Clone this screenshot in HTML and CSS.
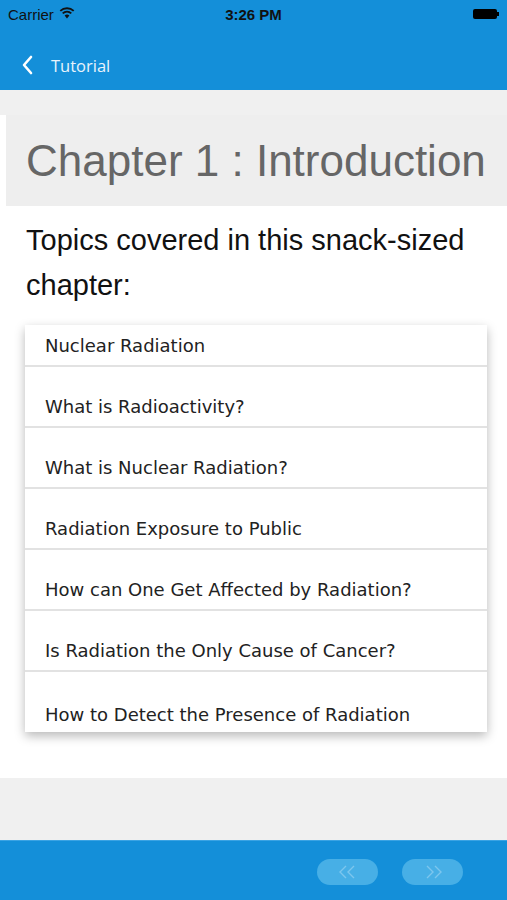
FILE: index.html
```html
<!DOCTYPE html>
<html>
<head>
<meta charset="utf-8">
<link rel="stylesheet" href="styles.css">
</head>
<body>
<div class="screen">
  <div class="topbar">
    <div class="status">
      <div class="carrier">Carrier
        <svg class="wifi" width="16" height="12" viewBox="0 0 16 12">
          <path d="M8 11.5 L5.6 8.6 A3.6 3.6 0 0 1 10.4 8.6 Z" fill="#111"/>
          <path d="M3.7 6.4 A6.4 6.4 0 0 1 12.3 6.4" stroke="#111" stroke-width="1.9" fill="none"/>
          <path d="M1.3 3.9 A10 10 0 0 1 14.7 3.9" stroke="#111" stroke-width="1.9" fill="none"/>
        </svg>
      </div>
      <div class="time">3:26 PM</div>
      <div class="battery"><span class="cell"></span><span class="nub"></span></div>
    </div>
    <div class="nav">
      <svg class="back" width="12" height="20" viewBox="0 0 12 20">
        <path d="M10 2 L3 10 L10 18" stroke="#fff" stroke-width="2.6" fill="none" stroke-linecap="round" stroke-linejoin="round"/>
      </svg>
      <span class="navtitle">Tutorial</span>
    </div>
  </div>
  <div class="graystrip"></div>
  <div class="content">
    <h1 class="chapter">Chapter 1 : Introduction</h1>
    <p class="topics">Topics covered in this snack-sized chapter:</p>
    <ul class="card">
      <li class="row first">Nuclear Radiation</li>
      <li class="row">What is Radioactivity?</li>
      <li class="row">What is Nuclear Radiation?</li>
      <li class="row">Radiation Exposure to Public</li>
      <li class="row">How can One Get Affected by Radiation?</li>
      <li class="row">Is Radiation the Only Cause of Cancer?</li>
      <li class="row last">How to Detect the Presence of Radiation</li>
    </ul>
  </div>
  <div class="graybottom"></div>
  <div class="footer">
    <button class="pill" aria-label="Previous">
      <svg width="20" height="14" viewBox="0 0 20 14"><path d="M8 1 L2 7 L8 13 M16 1 L10 7 L16 13" stroke="#7cc6ee" stroke-width="1.4" fill="none"/></svg>
    </button>
    <button class="pill" aria-label="Next">
      <svg width="20" height="14" viewBox="0 0 20 14"><path d="M4 1 L10 7 L4 13 M12 1 L18 7 L12 13" stroke="#7cc6ee" stroke-width="1.4" fill="none"/></svg>
    </button>
  </div>
</div>
</body>
</html>
```
FILE: styles.css
```css
* { box-sizing: border-box; }
html, body { margin: 0; padding: 0; }
body { width: 507px; height: 900px; overflow: hidden; background: #fff; font-family: "Liberation Sans", Arial, sans-serif; }
.screen { display: flex; flex-direction: column; height: 900px; }
.topbar { background: #148fd9; height: 90px; display: flex; flex-direction: column; }
.status { height: 28px; display: flex; align-items: center; justify-content: space-between; padding: 0 8px; color: #111; font-size: 15px; position: relative; }
.carrier { display: flex; align-items: center; gap: 5px; }
.wifi { margin-top: -2px; }
.time { font-weight: bold; font-size: 15px; position: absolute; left: 0; right: 0; text-align: center; }
.battery { display: flex; align-items: center; margin-right: 0; }
.cell { width: 24px; height: 10px; background: #000; border-radius: 2px; display: block; }
.nub { width: 2px; height: 4px; background: #000; display: block; }
.nav { flex: 1; display: flex; align-items: center; padding-left: 21px; padding-top: 12px; }
.back { margin-right: 18px; }
.navtitle { color: #e8f3fc; font-family: "Open Sans", sans-serif; font-size: 16.5px; }
.graystrip { height: 25px; background: #f0f0f0; }
.content { height: 663px; background: #fff; display: flex; flex-direction: column; }
.chapter { margin: 0 0 0 6px; height: 91px; background: #eeeeee; color: #666; font-weight: normal; font-size: 44px; display: flex; align-items: center; padding-left: 20px; padding-top: 0; white-space: nowrap; }
.topics { margin: 12px 20px 0 26px; font-size: 29px; line-height: 45px; color: #111; }
.card { list-style: none; margin: 17px 20px 0 25px; padding: 0; background: #fff; box-shadow: 0 4px 10px rgba(0,0,0,0.28); font-family: "DejaVu Sans", Verdana, sans-serif; font-size: 18px; color: #222; }
.row { height: 61px; display: flex; align-items: flex-end; padding: 0 0 9px 20px; border-bottom: 2px solid #e2e2e2; }
.row.first { height: 42px; }
.row.last { height: 60px; border-bottom: none; padding-bottom: 7px; }
.graybottom { height: 62px; background: #f0f0f0; }
.footer { height: 60px; background: #148fd9; display: flex; justify-content: flex-end; align-items: flex-start; padding: 18px 44px 0 0; gap: 24px; border-top: 1px solid #3aa3e4; }
.pill { width: 61px; height: 26px; border: none; border-radius: 13px; background: #47afe6; padding: 0; display: flex; align-items: center; justify-content: center; }
```
